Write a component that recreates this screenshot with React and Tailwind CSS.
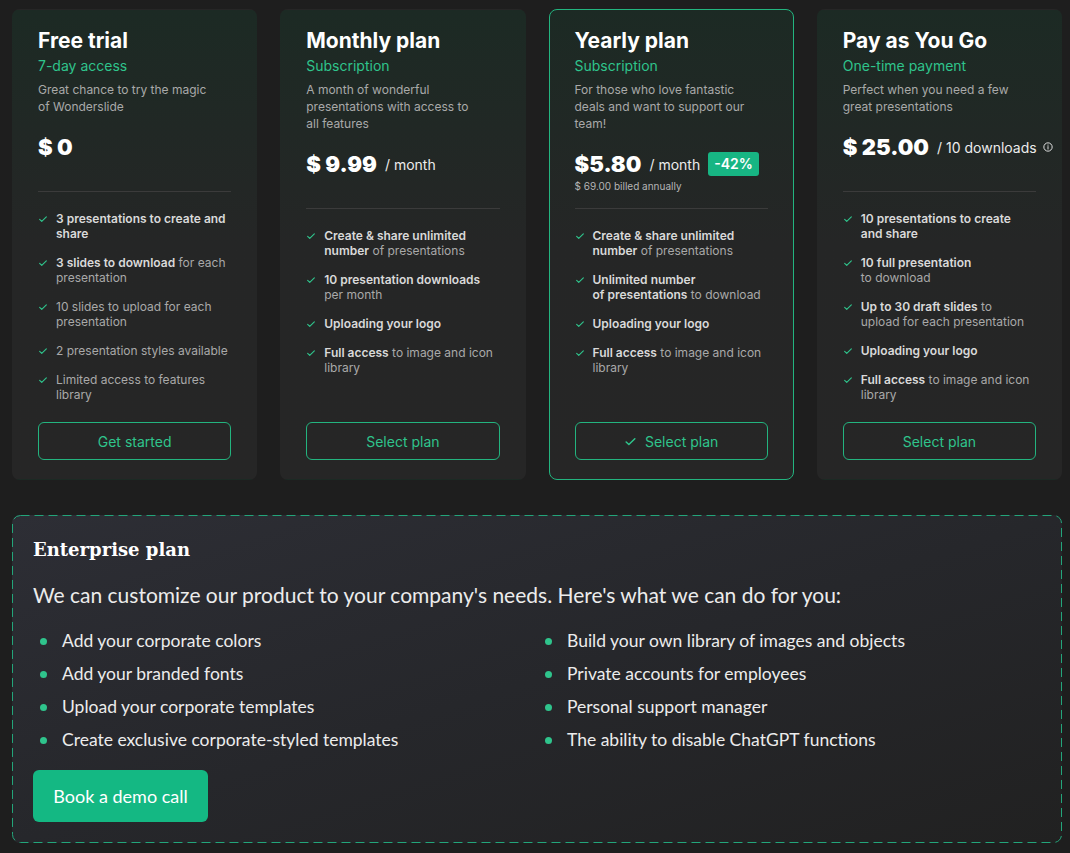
import React from "react";

const plans = [
  {
    title: "Free trial",
    sub: "7-day access",
    desc: ["Great chance to try the magic", "of Wonderslide"],
    price: "$ 0",
    features: [
      [["b", "3 presentations to create and share"]],
      [["b", "3 slides to download"], ["n", " for each presentation"]],
      [["n", "10 slides to upload for each presentation"]],
      [["n", "2 presentation styles available"]],
      [["n", "Limited access to features library"]],
    ],
    cta: "Get started",
  },
  {
    title: "Monthly plan",
    sub: "Subscription",
    desc: ["A month of wonderful", "presentations with access to", "all features"],
    price: "$ 9.99",
    unit: "/ month",
    features: [
      [["b", "Create & share unlimited number"], ["n", " of presentations"]],
      [["b", "10 presentation downloads"], ["n", " per month"]],
      [["b", "Uploading your logo"]],
      [["b", "Full access"], ["n", " to image and icon library"]],
    ],
    cta: "Select plan",
  },
  {
    title: "Yearly plan",
    sub: "Subscription",
    desc: ["For those who love fantastic", "deals and want to support our", "team!"],
    price: "$5.80",
    unit: "/ month",
    badge: "-42%",
    billed: "$ 69.00 billed annually",
    features: [
      [["b", "Create & share unlimited number"], ["n", " of presentations"]],
      [["b", "Unlimited number"], ["br"], ["b", "of presentations"], ["n", " to download"]],
      [["b", "Uploading your logo"]],
      [["b", "Full access"], ["n", " to image and icon library"]],
    ],
    cta: "Select plan",
    active: true,
  },
  {
    title: "Pay as You Go",
    sub: "One-time payment",
    desc: ["Perfect when you need a few", "great presentations"],
    price: "$ 25.00",
    unit: "/ 10 downloads",
    info: true,
    features: [
      [["b", "10 presentations to create"], ["br"], ["b", "and share"]],
      [["b", "10 full presentation"], ["br"], ["n", "to download"]],
      [["b", "Up to 30 draft slides"], ["n", " to"], ["br"], ["n", "upload for each presentation"]],
      [["b", "Uploading your logo"]],
      [["b", "Full access"], ["n", " to image and icon library"]],
    ],
    cta: "Select plan",
  },
];

const enterprise = [
  "Add your corporate colors",
  "Build your own library of images and objects",
  "Add your branded fonts",
  "Private accounts for employees",
  "Upload your corporate templates",
  "Personal support manager",
  "Create exclusive corporate-styled templates",
  "The ability to disable ChatGPT functions",
];

function Check({ className }) {
  return (
    <svg viewBox="0 0 12 12" className={className} fill="none" stroke="currentColor" strokeWidth="1.4" strokeLinecap="round" strokeLinejoin="round">
      <path d="M2 6.5l2.5 2.3L10 3.5" />
    </svg>
  );
}

function PlanCard({ plan }) {
  return (
    <div
      className={
        "flex flex-col rounded-lg bg-gradient-to-b from-[#1c2a24] via-[#252626] to-[#262626] px-[25px] pt-[18px] pb-[19px] " +
        (plan.active ? "border border-[#23b47f]" : "border border-transparent")
      }
    >
      <h3 className="text-[21px] font-bold leading-[26px] text-white">{plan.title}</h3>
      <div className="mt-[2px] text-[14px] leading-[20px] text-[#2fc48c]">{plan.sub}</div>
      <p className="mt-[5px] text-[12px] leading-[17px] text-[#a9a9a9]">
        {plan.desc.map((l, i) => (
          <React.Fragment key={i}>
            {l}
            {i < plan.desc.length - 1 && <br />}
          </React.Fragment>
        ))}
      </p>
      <div className="mt-[17px] flex items-center gap-[8px] whitespace-nowrap">
        <span className="text-[22px] font-black leading-[30px] text-white">{plan.price}</span>
        {plan.unit && (
          <span className="flex items-center gap-[6px] text-[14px] text-[#ececec]">
            {plan.unit}
            {plan.info && (
              <svg viewBox="0 0 12 12" className="h-[10px] w-[10px]" fill="none" stroke="currentColor" strokeWidth="1.1">
                <circle cx="6" cy="6" r="5" />
                <path d="M6 5.5v3M6 3.6v.3" strokeLinecap="round" />
              </svg>
            )}
          </span>
        )}
        {plan.badge && (
          <span className="rounded-[3px] bg-[#17b583] px-[6px] text-[14px] font-semibold leading-[24px] text-white">
            {plan.badge}
          </span>
        )}
      </div>
      <div className="h-[14px] text-[10px] leading-[14px] text-[#b5b5b5]">{plan.billed}</div>
      <div className="mt-[15px] border-t border-[#3b3b3b]" />
      <ul className="mt-[19px] flex flex-col gap-[14px]">
        {plan.features.map((f, i) => (
          <li key={i} className="flex gap-[8px] text-[12px] leading-[15px]">
            <Check className="mt-[3px] h-[10px] w-[10px] shrink-0 text-[#2fc48c]" />
            <span>
              {f.map((p, j) =>
                p[0] === "br" ? (
                  <br key={j} />
                ) : p[0] === "b" ? (
                  <span key={j} className="font-semibold text-[#d9d9d9]">{p[1]}</span>
                ) : (
                  <span key={j} className="text-[#a9a9a9]">{p[1]}</span>
                )
              )}
            </span>
          </li>
        ))}
      </ul>
      <button className="mt-auto flex h-[38px] items-center justify-center gap-[8px] rounded-md border border-[#23b47f] text-[14px] text-[#2fc48c]">
        {plan.active && <Check className="h-[13px] w-[13px]" />}
        {plan.cta}
      </button>
    </div>
  );
}

export default function App() {
  return (
    <div className="min-h-[853px] bg-[#1e1e1e] pl-3 pr-2 pt-[9px] pb-[10px] font-['Inter',sans-serif]">
      <div className="grid h-[471px] grid-cols-4 gap-[23px]">
        {plans.map((p) => (
          <PlanCard key={p.title} plan={p} />
        ))}
      </div>

      <div className="relative mt-[35px] h-[328px] rounded-lg bg-gradient-to-br from-[#2d2e35] via-[#26272b] to-[#212121] px-[21px] pt-[21px] font-['Lato',sans-serif]">
        <svg className="pointer-events-none absolute inset-0 h-full w-full" preserveAspectRatio="none">
          <rect x="0.5" y="0.5" width="calc(100% - 1px)" height="calc(100% - 1px)" rx="8" fill="none" stroke="#23a57a" strokeWidth="1" strokeDasharray="9 5" />
        </svg>
        <h2 className="font-['DejaVu_Serif',serif] text-[18px] font-bold leading-[28px] text-white">Enterprise plan</h2>
        <p className="mt-[16px] text-[21px] leading-[30px] text-[#ececec]">
          We can customize our product to your company's needs. Here's what we can do for you:
        </p>
        <ul className="mt-[19px] grid grid-cols-[505px_1fr] gap-y-[9px]">
          {enterprise.map((t) => (
            <li key={t} className="flex items-center gap-[15px] pl-[7px] text-[17.5px] leading-[24px] text-[#ececec]">
              <span className="h-[7px] w-[7px] rounded-full bg-[#2fc48c]" />
              {t}
            </li>
          ))}
        </ul>
        <button className="mt-[18px] h-[52px] w-[175px] rounded-md bg-[#14b883] text-[18px] text-white">
          Book a demo call
        </button>
      </div>
    </div>
  );
}
